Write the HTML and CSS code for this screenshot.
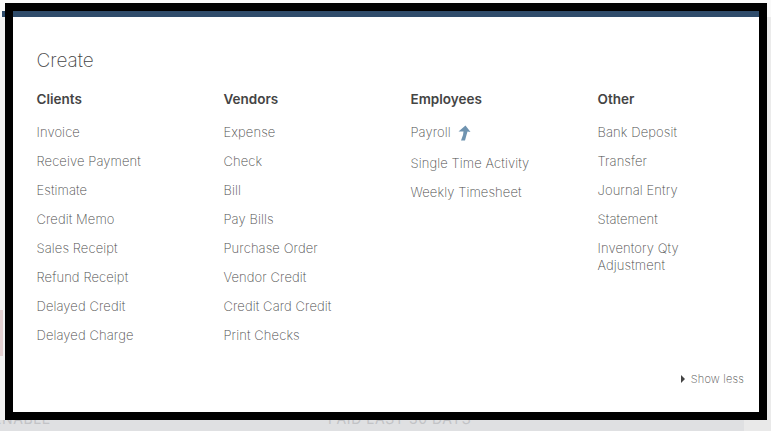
FILE: index.html
```html
<!DOCTYPE html>
<html lang="en">
<head>
  <meta charset="UTF-8" />
  <title>Create</title>
  <link rel="stylesheet" href="styles.css">
</head>
<body>

  <!-- Page behind the dialog -->
  <div class="page">
    <div class="page-top"><div class="page-bar"></div></div>
    <div class="page-mid">
      <div class="page-side">
        <div class="side-pink"></div>
      </div>
      <div class="page-right"></div>
    </div>
    <div class="page-bottom">
      <span class="ghost ghost-left">ENABLE</span>
      <span class="ghost ghost-mid">PAID LAST 30 DAYS</span>
      <div class="page-corner"></div>
    </div>
  </div>

  <!-- Create dialog -->
  <div class="dialog">
    <div class="dialog-bar"></div>
    <div class="dialog-body">
      <h1>Create</h1>
      <div class="columns">
        <div class="column">
          <h2>Clients</h2>
          <a>Invoice</a>
          <a>Receive Payment</a>
          <a>Estimate</a>
          <a>Credit Memo</a>
          <a>Sales Receipt</a>
          <a>Refund Receipt</a>
          <a>Delayed Credit</a>
          <a>Delayed Charge</a>
        </div>
        <div class="column">
          <h2>Vendors</h2>
          <a>Expense</a>
          <a>Check</a>
          <a>Bill</a>
          <a>Pay Bills</a>
          <a>Purchase Order</a>
          <a>Vendor Credit</a>
          <a>Credit Card Credit</a>
          <a>Print Checks</a>
        </div>
        <div class="column">
          <h2>Employees</h2>
          <a class="payroll">Payroll
            <svg class="up-icon" width="14" height="16" viewBox="0 0 14 16">
              <path d="M8.5 0.5 L13.5 7 L10.5 6.5 L9.5 10 L8 15.5 L4 15.5 L6 10 L6.5 6.5 L1.5 6.5 Z" fill="#6f93b0"/>
            </svg>
          </a>
          <a>Single Time Activity</a>
          <a>Weekly Timesheet</a>
        </div>
        <div class="column">
          <h2>Other</h2>
          <a>Bank Deposit</a>
          <a>Transfer</a>
          <a>Journal Entry</a>
          <a>Statement</a>
          <a class="two-line">Inventory Qty Adjustment</a>
        </div>
      </div>
      <div class="show-less"><span class="arrow"></span>Show less</div>
    </div>
  </div>

</body>
</html>
```

FILE: styles.css
```css
* {
  margin: 0;
  padding: 0;
  box-sizing: border-box;
}

body {
  width: 771px;
  height: 431px;
  overflow: hidden;
  position: relative;
  background: #dfe0e2;
  font-family: "Inter", "Liberation Sans", sans-serif;
}

.page {
  width: 771px;
  height: 431px;
  display: flex;
  flex-direction: column;
}

.page-top {
  height: 17px;
  background: #fafafa;
  padding: 11px 0 0 2px;
}

.page-bar {
  width: 4px;
  height: 6px;
  background: #2f4c6b;
}

.page-mid {
  height: 403px;
  display: flex;
  justify-content: space-between;
}

.page-side {
  width: 5px;
  padding-top: 293px;
  background: #f2f2f2;
}

.side-pink {
  width: 3px;
  height: 46px;
  background: #e3cfd0;
}

.page-right {
  width: 4px;
  background: #ebebeb;
}

.page-bottom {
  flex: 1;
  display: flex;
  background: #dfe0e2;
  overflow: hidden;
}

.ghost {
  font-size: 14px;
  line-height: 16px;
  letter-spacing: 0.6px;
  color: #c2c3c6;
  margin-top: -9px;
}

.ghost-left {
  margin-left: -7px;
  width: 335px;
}

.page-corner {
  width: 27px;
  margin-left: auto;
  background: #e9e9e9;
}

/* dialog sits over the page */
.dialog {
  position: absolute;
  left: 5px;
  top: 3px;
  width: 762px;
  height: 417px;
  border: 8px solid #000;
  background: #fff;
  display: flex;
  flex-direction: column;
}

.dialog-bar {
  height: 6px;
  background: #2f4c6b;
}

.dialog-body {
  flex: 1;
  display: flex;
  flex-direction: column;
  padding: 31px 15px 0 23.5px;
}

h1 {
  font-size: 19px;
  line-height: 26px;
  font-weight: 200;
  color: #444;
}

.columns {
  display: grid;
  grid-template-columns: repeat(4, 187px);
  margin-top: 16px;
  height: 262px;
}

.column h2 {
  font-size: 13.5px;
  line-height: 18px;
  font-weight: 600;
  color: #444;
  margin-bottom: 16px;
}

.column a {
  display: block;
  font-size: 13px;
  line-height: 17px;
  font-weight: 200;
  letter-spacing: 0.1px;
  color: #4c4c4c;
  margin-bottom: 12.07px;
}

.column .payroll {
  display: flex;
  align-items: center;
  gap: 6px;
  margin-bottom: 14px;
}

.two-line {
  width: 110px;
}

.show-less {
  align-self: flex-end;
  display: flex;
  align-items: center;
  gap: 6px;
  font-size: 11px;
  line-height: 14px;
  font-weight: 200;
  letter-spacing: 0.2px;
  color: #4c4c4c;
  margin-top: 19.5px;
}

.arrow {
  width: 0;
  height: 0;
  border-left: 4px solid #444;
  border-top: 4px solid transparent;
  border-bottom: 4px solid transparent;
}
```
